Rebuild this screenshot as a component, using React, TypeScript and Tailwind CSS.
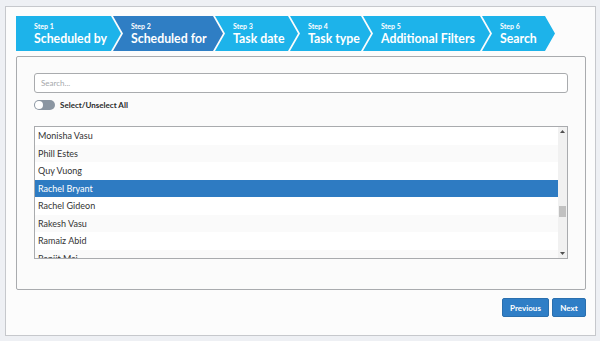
import React from "react";

const steps = [
  { n: 1, label: "Scheduled by", w: "w-[105px]", first: true },
  { n: 2, label: "Scheduled for", w: "w-[110px]", active: true },
  { n: 3, label: "Task date", w: "w-[83px]" },
  { n: 4, label: "Task type", w: "w-[81px]" },
  { n: 5, label: "Additional Filters", w: "w-[127px]" },
  { n: 6, label: "Search", w: "w-[73px]" },
];

const people = [
  "Monisha Vasu",
  "Phill Estes",
  "Quy Vuong",
  "Rachel Bryant",
  "Rachel Gideon",
  "Rakesh Vasu",
  "Ramaiz Abid",
  "Ranjit Mai",
];

export default function App() {
  return (
    <div className="w-[600px] h-[341px] bg-[#eef0f4] pt-[6px] pl-[5px] font-['Lato','Liberation_Sans',sans-serif] overflow-hidden">
      <div className="w-[591px] h-[330px] border border-[#c6c8cc] bg-[#fcfcfc] pt-[9px] pl-[10px] pr-[9px] flex flex-col">
        {/* Steps */}
        <div className="flex h-[35px]">
          {steps.map((s) => (
            <div
              key={s.n}
              className={`${s.w} h-[35px] shrink-0 flex flex-col justify-center text-white ${
                s.active ? "bg-[#2f7ec4]" : "bg-[#1db3ea]"
              } ${
                s.first
                  ? "pl-[18px] [clip-path:polygon(0_0,calc(100%-10px)_0,100%_50%,calc(100%-10px)_100%,0_100%)]"
                  : "-ml-[8px] pl-[18px] [clip-path:polygon(0_0,calc(100%-10px)_0,100%_50%,calc(100%-10px)_100%,0_100%,10px_50%)]"
              }`}
            >
              <span className="text-[7px] font-bold leading-[9px] mt-[1px]">Step {s.n}</span>
              <span className="text-[12.3px] font-bold leading-[16px] whitespace-nowrap">{s.label}</span>
            </div>
          ))}
        </div>

        {/* Panel */}
        <div className="mt-[5px] w-[570px] h-[234px] border border-[#a9abae] rounded-[2px] bg-[#fbfbfb] px-[17px] pt-[16px]">
          <div className="h-[20px] border border-[#a9abae] rounded-[3px] bg-white flex items-center pl-[6px]">
            <span className="text-[8px] text-[#a4a7ab]">Search...</span>
          </div>

          <div className="mt-[6px] flex items-center gap-[5px]">
            <div className="w-[21px] h-[10px] rounded-full bg-[#8b96a2] flex items-center pl-[1px]">
              <div className="w-[8px] h-[8px] rounded-full bg-white" />
            </div>
            <span className="text-[8px] font-bold text-[#2b2b2b]">Select/Unselect All</span>
          </div>

          <div className="mt-[15px] h-[133px] border border-[#a9abae] bg-white flex overflow-hidden">
            <div className="flex-1 overflow-hidden">
              {people.map((p, i) => (
                <div
                  key={p}
                  className={`h-[17.5px] flex items-center pl-[3px] text-[9px] ${
                    p === "Rachel Bryant"
                      ? "bg-[#2e7bc2] text-white"
                      : i % 2 === 0
                      ? "bg-white text-[#333333]"
                      : "bg-[#fafafa] text-[#333333]"
                  }`}
                >
                  {p}
                </div>
              ))}
            </div>
            <div className="w-[9px] bg-[#f1f1f1] flex flex-col items-center justify-between py-[3px] relative">
              <svg width="5" height="3" viewBox="0 0 5 3">
                <path d="M0 3 L2.5 0 L5 3 Z" fill="#505050" />
              </svg>
              <div className="absolute top-[79px] left-[1px] w-[7px] h-[11px] bg-[#c1c1c1]" />
              <svg width="5" height="3" viewBox="0 0 5 3">
                <path d="M0 0 L2.5 3 L5 0 Z" fill="#505050" />
              </svg>
            </div>
          </div>
        </div>

        {/* Buttons */}
        <div className="mt-[8px] flex justify-end gap-[3px] w-[570px]">
          <button className="w-[47px] h-[19px] bg-[#2f7ec6] border border-[#2a6fae] rounded-[2px] text-white text-[8px] font-bold">
            Previous
          </button>
          <button className="w-[34px] h-[19px] bg-[#2f7ec6] border border-[#2a6fae] rounded-[2px] text-white text-[8px] font-bold">
            Next
          </button>
        </div>
      </div>
    </div>
  );
}
